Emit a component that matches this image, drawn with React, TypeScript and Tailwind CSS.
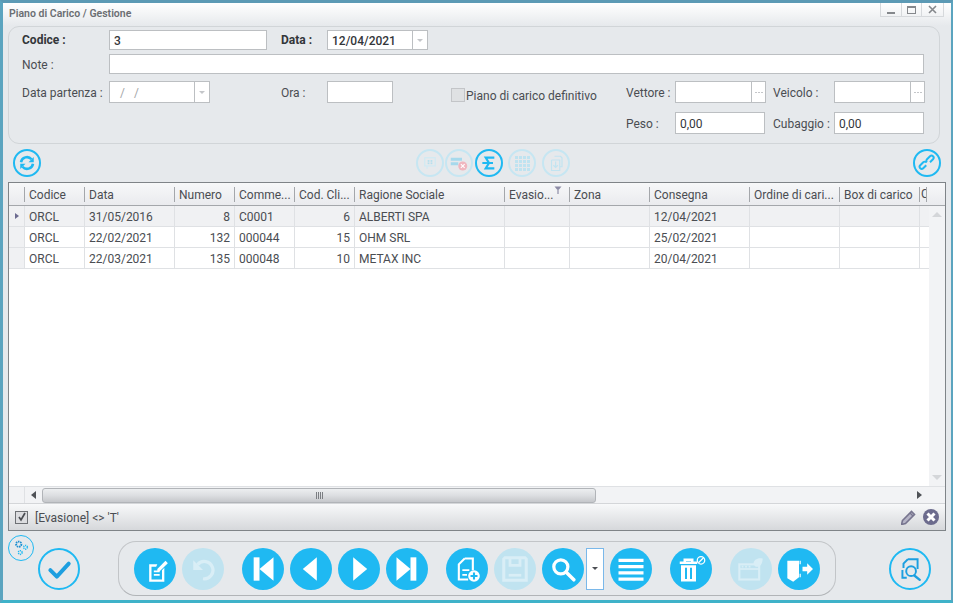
import type { ReactNode } from 'react'

const font = "[font-family:Roboto,sans-serif]"

const columns = [
  { label: 'Codice', w: 'w-[60px]', right: false },
  { label: 'Data', w: 'w-[90px]', right: false },
  { label: 'Numero', w: 'w-[60px]', right: true },
  { label: 'Comme...', w: 'w-[60px]', right: false },
  { label: 'Cod. Cli...', w: 'w-[60px]', right: true },
  { label: 'Ragione Sociale', w: 'w-[150px]', right: false },
  { label: 'Evasio...', w: 'w-[65px]', right: false },
  { label: 'Zona', w: 'w-[80px]', right: false },
  { label: 'Consegna', w: 'w-[100px]', right: false },
  { label: 'Ordine di cari...', w: 'w-[90px]', right: false },
  { label: 'Box di carico', w: 'w-[80px]', right: false },
]

const rows = [
  ['ORCL', '31/05/2016', '8', 'C0001', '6', 'ALBERTI SPA', '', '', '12/04/2021', '', ''],
  ['ORCL', '22/02/2021', '132', '000044', '15', 'OHM SRL', '', '', '25/02/2021', '', ''],
  ['ORCL', '22/03/2021', '135', '000048', '10', 'METAX INC', '', '', '20/04/2021', '', ''],
]

function Ico({ children, size = 24, view = 24 }: { children: ReactNode; size?: number; view?: number }) {
  return (
    <svg width={size} height={size} viewBox={`0 0 ${view} ${view}`} fill="none">
      {children}
    </svg>
  )
}

// pulsante pieno della barra in basso
function Solid({ children, off }: { children: ReactNode; off?: boolean }) {
  return (
    <div className={`w-[42px] h-[42px] shrink-0 rounded-full flex items-center justify-center ${off ? 'bg-[#c0e3f0]' : 'bg-[#1fb9f2]'}`}>
      {children}
    </div>
  )
}

// pulsante a cerchio vuoto
function Ring({ children, size, off }: { children: ReactNode; size: string; off?: boolean }) {
  return (
    <div className={`${size} shrink-0 rounded-full flex items-center justify-center border-2 ${off ? 'border-[#c6e6f2]' : 'border-[#1fb9f2]'}`}>
      {children}
    </div>
  )
}

function Label({ children, className = '' }: { children: ReactNode; className?: string }) {
  return <span className={`shrink-0 text-[#4a4d52] text-[12px] leading-none whitespace-nowrap ${className}`}>{children}</span>
}

function Input({ w, h = 'h-[20px]', value, bold, button, muted }: { w: string; h?: string; value?: string; bold?: boolean; button?: 'arrow' | 'dots'; muted?: boolean }) {
  return (
    <div className={`${w} ${h} shrink-0 flex bg-white border border-[#bcbfc2] text-[12px] text-[#33363a] items-center`}>
      <span className={`flex-1 min-w-0 pt-[1px] ${muted ? 'pl-[10px] text-[#a4a6a9] tracking-[3px]' : 'pl-[4px]'} ${bold ? 'font-medium' : ''}`}>{value}</span>
      {button === 'arrow' && (
        <span className="w-[15px] h-full border-l border-[#bcbfc2] flex items-center justify-center">
          <span className="w-0 h-0 border-x-[3px] border-x-transparent border-t-[3px] border-t-[#c4c6c9]" />
        </span>
      )}
      {button === 'dots' && (
        <span className="w-[14px] h-full border-l border-[#bcbfc2] flex items-center justify-center gap-[1px]">
          <span className="w-[2px] h-[1px] bg-[#c4c6c9]" />
          <span className="w-[2px] h-[1px] bg-[#c4c6c9]" />
          <span className="w-[2px] h-[1px] bg-[#c4c6c9]" />
        </span>
      )}
    </div>
  )
}

function FormPanel() {
  return (
    <div className="ml-[5px] mr-[11px] h-[118px] shrink-0 rounded-[11px] border border-[#d1d5d8] pl-[13px] pt-[3px] flex flex-col">
      <div className="flex items-center h-[20px]">
        <Label className="w-[87px] font-bold text-[#33363a]">Codice :</Label>
        <Input w="w-[158px]" value="3" bold />
        <Label className="w-[60px] pl-[14px] font-bold text-[#33363a]">Data :</Label>
        <Input w="w-[101px]" value="12/04/2021" bold button="arrow" />
      </div>
      <div className="flex items-center h-[20px] mt-[4px]">
        <Label className="w-[87px] mt-[1px]">Note :</Label>
        <Input w="w-[815px]" />
      </div>
      <div className="flex items-center h-[22px] mt-[7px]">
        <Label className="w-[87px] mt-[1px]">Data partenza :</Label>
        <Input w="w-[101px]" h="h-[22px]" value="/ /" muted button="arrow" />
        <Label className="w-[117px] pl-[71px] mt-[1px]">Ora :</Label>
        <Input w="w-[66px]" h="h-[22px]" />
        <div className="w-[14px] h-[14px] ml-[58px] mt-[6px] bg-[#dfe1e3] border border-[#c3c5c8]" />
        <span className="ml-[1px] w-[160px] mt-[8px] text-[12px] leading-none text-[#4a4d52] whitespace-nowrap">Piano di carico definitivo</span>
        <Label className="w-[49px] mt-[1px]">Vettore :</Label>
        <Input w="w-[91px]" h="h-[22px]" button="dots" />
        <Label className="w-[68px] pl-[7px] mt-[1px]">Veicolo :</Label>
        <Input w="w-[91px]" h="h-[22px]" button="dots" />
      </div>
      <div className="flex items-center h-[22px] mt-[9px] pl-[604px]">
        <Label className="w-[49px] mt-[1px]">Peso :</Label>
        <Input w="w-[90px]" h="h-[22px]" value="0,00" />
        <Label className="w-[69px] pl-[8px] mt-[1px]">Cubaggio :</Label>
        <Input w="w-[90px]" h="h-[22px]" value="0,00" />
      </div>
    </div>
  )
}

function GridTable() {
  return (
    <div className="ml-[5px] mr-[5px] h-[349px] shrink-0 border border-[#7f8488] bg-white flex flex-col overflow-hidden">
      {/* intestazione */}
      <div className="h-[23px] shrink-0 flex bg-gradient-to-b from-[#f7f8f9] to-[#eaebee] border-b border-[#a4a7ab] text-[12px] text-[#4a4d52]">
        <div className="w-[16px] shrink-0 flex items-center justify-end">
          <span className="w-px h-[15px] bg-[#a4a7ab]" />
        </div>
        {columns.map((c, i) => (
          <div key={c.label} className={`${c.w} relative shrink-0 flex items-center justify-between pl-[4px] pt-[1px] whitespace-nowrap overflow-hidden`}>
            <span>{c.label}</span>
            {i === 6 && (
              <svg className="absolute right-[8px] top-[3px]" width="8" height="8" viewBox="0 0 8 8">
                <path d="M0.5 0.5h7L5 3.5h-2z" fill="#8d8ca6" />
                <path d="M3.4 3h1.2v5H3.4z" fill="#8d8ca6" />
              </svg>
            )}
            <span className="w-px h-[15px] bg-[#a4a7ab] absolute right-0 top-[4px]" />
          </div>
        ))}
        <div className="flex-1 pl-[1px] overflow-hidden flex items-center">
          <span className="w-[5px] overflow-hidden">C</span>
          <span className="w-px h-[15px] bg-[#a4a7ab]" />
        </div>
      </div>
      {/* righe */}
      <div className="flex-1 flex min-h-0">
        <div className="w-[920px] shrink-0 flex flex-col">
          {rows.map((r, ri) => (
            <div key={ri} className={`h-[21px] shrink-0 flex border-b border-[#dfe1e4] text-[12px] text-[#4a4d52] ${ri === 0 ? 'bg-[#f0f1f3]' : 'bg-white'}`}>
              <div className="w-[16px] shrink-0 bg-[#f0f1f3] border-r border-[#dfe1e4] flex items-center justify-center">
                {ri === 0 && <span className="w-0 h-0 border-y-[3px] border-y-transparent border-l-[4px] border-l-[#6c6b90]" />}
              </div>
              {columns.map((c, ci) => (
                <div key={c.label} className={`${c.w} shrink-0 border-r border-[#dfe1e4] px-[4px] pt-[1px] flex items-center whitespace-nowrap ${c.right ? 'justify-end' : ''}`}>
                  {r[ci]}
                </div>
              ))}
            </div>
          ))}
        </div>
        <div className="flex-1 bg-[#f2f3f5] flex flex-col items-center pt-[6px]">
          <span className="w-0 h-0 border-x-[5px] border-x-transparent border-b-[5px] border-b-[#d4d6d9]" />
          <span className="mt-auto mb-[6px] w-0 h-0 border-x-[5px] border-x-transparent border-t-[5px] border-t-[#d4d6d9]" />
        </div>
      </div>
      {/* barra orizzontale */}
      <div className="h-[17px] shrink-0 flex items-center bg-[#f2f3f5] border-t border-[#dfe1e4]">
        <div className="w-[16px] h-full shrink-0 border-r border-[#dfe1e4]" />
        <span className="ml-[6px] w-0 h-0 border-y-[4px] border-y-transparent border-r-[5px] border-r-[#4f5257]" />
        <div className="ml-[6px] w-[554px] h-[15px] rounded-[3px] border border-[#b1b4b8] bg-gradient-to-b from-[#eceef0] via-[#dcdee1] to-[#c5c7cb] flex items-center justify-center">
          <span className="flex gap-[1px]">
            <span className="w-px h-[7px] bg-[#7b7e82]" />
            <span className="w-px h-[7px] bg-[#7b7e82]" />
            <span className="w-px h-[7px] bg-[#7b7e82]" />
            <span className="w-px h-[7px] bg-[#7b7e82]" />
          </span>
        </div>
        <span className="ml-[321px] w-0 h-0 border-y-[4px] border-y-transparent border-l-[5px] border-l-[#4f5257]" />
      </div>
      {/* filtro */}
      <div className="h-[27px] shrink-0 flex items-center pl-[6px] pr-[6px] border-t border-[#d4d6d9] bg-gradient-to-b from-[#f8f9fa] to-[#d6d8db]">
        <div className="w-[13px] h-[13px] border border-[#6e7175] bg-[#dcdde0] flex items-center justify-center">
          <svg width="10" height="10" viewBox="0 0 10 10" fill="none">
            <path d="M2 5l2 3 4-7" stroke="#4a4d52" strokeWidth="1.7" />
          </svg>
        </div>
        <span className="ml-[7px] pt-[1px] text-[12px] text-[#4a4d52]">[Evasione] &lt;&gt; 'T'</span>
        <svg className="ml-auto" width="16" height="16" viewBox="0 0 16 16" fill="none">
          <path d="M1.5 11.5L10.5 2.5l3 3-9 9-4 1z" stroke="#77758f" strokeWidth="1.6" fill="#b5b4c6" />
          <path d="M9 4l3 3" stroke="#77758f" strokeWidth="1.2" />
        </svg>
        <svg className="ml-[6px]" width="16" height="16" viewBox="0 0 16 16">
          <circle cx="8" cy="8" r="8" fill="#6c6b8d" />
          <path d="M4.5 4.5l7 7M11.5 4.5l-7 7" stroke="#fff" strokeWidth="3" />
        </svg>
      </div>
    </div>
  )
}

function MidToolbar() {
  return (
    <div className="mx-[10px] h-[38px] shrink-0 flex items-center">
      <Ring size="w-[28px] h-[28px]">
        <Ico size={18}>
          <path d="M4 11a8 8 0 0 1 14-4" stroke="#1fb9f2" strokeWidth="3.4" />
          <path d="M21 4v7h-7z" fill="#1fb9f2" />
          <path d="M20 13a8 8 0 0 1-14 4" stroke="#1fb9f2" strokeWidth="3.4" />
          <path d="M3 20v-7h7z" fill="#1fb9f2" />
        </Ico>
      </Ring>
      <div className="ml-[375px]">
        <Ring size="w-[28px] h-[28px]" off>
          <Ico size={14}>
            <rect x="3" y="3" width="18" height="14" stroke="#cfeaf4" strokeWidth="2" />
            <path d="M7 17v5" stroke="#cfeaf4" strokeWidth="2" />
            <rect x="8" y="7" width="3" height="3" fill="#b5dfee" />
            <rect x="13" y="7" width="3" height="3" fill="#b5dfee" />
            <rect x="8" y="11" width="3" height="3" fill="#b5dfee" />
            <rect x="13" y="11" width="3" height="3" fill="#b5dfee" />
          </Ico>
        </Ring>
      </div>
      <div className="ml-[1px]">
        <Ring size="w-[28px] h-[28px]" off>
          <Ico size={18}>
            <rect x="1" y="5" width="15" height="4" fill="#a6d9ec" />
            <rect x="1" y="11" width="10" height="4" fill="#a6d9ec" />
            <circle cx="17" cy="16" r="6" fill="#f0b6bf" />
            <path d="M14.5 13.5l5 5M19.5 13.5l-5 5" stroke="#fff" strokeWidth="1.5" />
          </Ico>
        </Ring>
      </div>
      <div className="ml-[2px]">
        <Ring size="w-[28px] h-[28px]">
          <Ico size={16}>
            <path d="M20 4H7l5 8-5 8h13M2 12h16" stroke="#1fb9f2" strokeWidth="3.2" />
          </Ico>
        </Ring>
      </div>
      <div className="ml-[5px]">
        <Ring size="w-[28px] h-[28px]" off>
          <div className="grid grid-cols-4 gap-px">
            {Array.from({ length: 16 }).map((_, i) => (
              <span key={i} className="w-[3px] h-[3px] bg-[#bfe3f0]" />
            ))}
          </div>
        </Ring>
      </div>
      <div className="ml-[6px]">
        <Ring size="w-[28px] h-[28px]" off>
          <Ico size={18}>
            <path d="M10 3h8l2 2v12h-3M6 8v14h11V8H6" stroke="#c2e4f1" strokeWidth="1.6" />
            <path d="M11.5 10v8M8.5 15l3 3 3-3" stroke="#c2e4f1" strokeWidth="1.6" />
          </Ico>
        </Ring>
      </div>
      <div className="ml-auto">
        <Ring size="w-[28px] h-[28px]">
          <Ico size={18}>
            <path d="M10 14l-4 4a2.8 2.8 0 0 1-4-4l4-4a2.8 2.8 0 0 1 4 0" stroke="#1fb9f2" strokeWidth="2.6" transform="translate(1 1)" />
            <path d="M14 10l4-4a2.8 2.8 0 0 0-4-4l-4 4a2.8 2.8 0 0 0 0 4" stroke="#1fb9f2" strokeWidth="2.6" transform="translate(2 1)" />
          </Ico>
        </Ring>
      </div>
    </div>
  )
}

function BottomBar() {
  return (
    <div className="flex-1 flex min-h-0 pl-[5px]">
      <div className="w-[26px] h-[26px] mt-[4px] shrink-0 rounded-full border border-[#1fb9f2] flex items-center justify-center">
        <Ico size={18}>
          <circle cx="9" cy="7" r="3.5" stroke="#1f8fd0" strokeWidth="2.5" strokeDasharray="2 1" />
          <circle cx="18" cy="11" r="2.5" stroke="#1fb9f2" strokeWidth="2" strokeDasharray="1.5 1" />
          <circle cx="11" cy="18" r="2.5" stroke="#1fb9f2" strokeWidth="2" strokeDasharray="1.5 1" />
        </Ico>
      </div>
      <div className="ml-[4px] mt-[17px]">
        <Ring size="w-[42px] h-[42px]">
          <Ico size={26}>
            <path d="M4 13l6 6L21 7" stroke="#1d9fe0" strokeWidth="3.6" strokeLinecap="round" strokeLinejoin="round" />
          </Ico>
        </Ring>
      </div>
      {/* barra principale */}
      <div className="ml-[38px] mt-[10px] w-[718px] h-[55px] shrink-0 rounded-[18px] border border-[#c2c5c8] border-b-[#b1b4b7] flex items-center pl-[15px]">
        <Solid>
          <Ico size={28}>
            <path d="M7 8h7l-1 2H9v11h9v-8l2-2v12H7z" fill="#fff" />
            <path d="M11 14h5M11 17h5" stroke="#fff" strokeWidth="1.6" />
            <path d="M14 12l7-7 2 2-7 7h-2z" fill="#fff" />
          </Ico>
        </Solid>
        <div className="ml-[6px]">
          <Solid off>
            <Ico size={26}>
              <path d="M7 8a8 8 0 1 1 5 13" stroke="#d9eef6" strokeWidth="3" />
              <path d="M3 4v9h9z" fill="#d9eef6" />
            </Ico>
          </Solid>
        </div>
        <div className="ml-[18px]">
          <Solid>
            <Ico size={28}>
              <rect x="4" y="2" width="5" height="20" fill="#fff" />
              <path d="M21 2v20L9 12z" fill="#fff" />
            </Ico>
          </Solid>
        </div>
        <div className="ml-[6px]">
          <Solid>
            <Ico size={28}>
              <path d="M17 2v20L5 12z" fill="#fff" />
            </Ico>
          </Solid>
        </div>
        <div className="ml-[6px]">
          <Solid>
            <Ico size={28}>
              <path d="M7 2v20l12-10z" fill="#fff" />
            </Ico>
          </Solid>
        </div>
        <div className="ml-[6px]">
          <Solid>
            <Ico size={28}>
              <rect x="15" y="2" width="5" height="20" fill="#fff" />
              <path d="M3 2v20l12-10z" fill="#fff" />
            </Ico>
          </Solid>
        </div>
        <div className="ml-[18px]">
          <Solid>
            <Ico size={28}>
              <path d="M10 3h7v10M10 3L5 8v13h8" stroke="#fff" strokeWidth="1.8" />
              <path d="M8 13h6M8 17h4" stroke="#fff" strokeWidth="1.5" />
              <circle cx="18" cy="18" r="5" fill="#fff" />
              <path d="M18 15v6M15 18h6" stroke="#1fb9f2" strokeWidth="1.8" />
            </Ico>
          </Solid>
        </div>
        <div className="ml-[6px]">
          <Solid off>
            <Ico size={30}>
              <path d="M4 3h16l1 1v17H3V4z" stroke="#d9eef6" strokeWidth="2.4" />
              <path d="M8 3v6h8V3" stroke="#d9eef6" strokeWidth="2.2" />
              <path d="M7 17h10" stroke="#d9eef6" strokeWidth="2.2" />
            </Ico>
          </Solid>
        </div>
        <div className="ml-[6px]">
          <Solid>
            <Ico size={26}>
              <circle cx="10" cy="10" r="6.5" stroke="#fff" strokeWidth="3" />
              <path d="M15 15l7 7" stroke="#fff" strokeWidth="3.2" strokeLinecap="round" />
            </Ico>
          </Solid>
        </div>
        <div className="ml-[2px] w-[18px] h-[42px] shrink-0 bg-white border border-[#7ab8ea] flex items-center justify-center">
          <span className="w-0 h-0 border-x-[3px] border-x-transparent border-t-[3px] border-t-[#4c4f54]" />
        </div>
        <div className="ml-[6px]">
          <Solid>
            <Ico size={30}>
              <path d="M2 5h20M2 10h20M2 15h20M2 20h20" stroke="#fff" strokeWidth="2.6" />
            </Ico>
          </Solid>
        </div>
        <div className="ml-[18px]">
          <Solid>
            <Ico size={30}>
              <path d="M3 7h14M7 7V4.5h6V7" stroke="#fff" strokeWidth="2" />
              <path d="M4 9h12v13H4z" fill="#fff" />
              <path d="M8 11v9M12 11v9" stroke="#1fb9f2" strokeWidth="1.6" />
              <circle cx="20" cy="5" r="3" stroke="#fff" strokeWidth="1" />
              <path d="M18 7l4-4" stroke="#fff" strokeWidth="1" />
            </Ico>
          </Solid>
        </div>
        <div className="ml-[18px]">
          <Solid off>
            <Ico size={28}>
              <rect x="2" y="8" width="17" height="13" stroke="#d9eef6" strokeWidth="1.8" />
              <path d="M2 12h17" stroke="#d9eef6" strokeWidth="1.4" />
              <path d="M4 10h1.5M7 10h1.5M10 10h1.5" stroke="#d9eef6" strokeWidth="1.4" />
              <path d="M14 8c0-4 4-6 8-5 0 4-2 8-6 7z" fill="#d9eef6" />
            </Ico>
          </Solid>
        </div>
        <div className="ml-[6px]">
          <Solid>
            <Ico size={28}>
              <path d="M2 5h10v14l-5 4-5-3z" fill="#fff" />
              <path d="M13 5v3M13 16v3" stroke="#fff" strokeWidth="1" />
              <path d="M15 10h4V7l5 5-5 5v-3h-4z" fill="#fff" />
            </Ico>
          </Solid>
        </div>
      </div>
      <div className="ml-[53px] mt-[17px]">
        <Ring size="w-[42px] h-[42px]">
          <Ico size={26}>
            <path d="M10 3h9v9M10 3L6 7v4" stroke="#1d9fe0" strokeWidth="1.8" />
            <path d="M5 13v7h4" stroke="#1d9fe0" strokeWidth="1.8" />
            <circle cx="13" cy="14" r="4.5" stroke="#1d9fe0" strokeWidth="1.8" />
            <path d="M16 18l5 4" stroke="#1d9fe0" strokeWidth="2.2" strokeLinecap="round" />
          </Ico>
        </Ring>
      </div>
    </div>
  )
}

export default function App() {
  return (
    <div className={`${font} w-[953px] h-[603px] overflow-hidden bg-[#e6e9ec] flex flex-col border-t-[3px] border-t-[#5c9ab5] border-l-[3px] border-l-[#5ba4bf] border-r-[2px] border-r-[#5ba4bf] border-b-[3px] border-b-[#3fb2c9]`}>
      <div className="h-[23px] shrink-0 flex items-start justify-between bg-gradient-to-b from-[#ffffff] to-[#e6e9ec]">
        <span className="pl-[6px] pt-[4px] text-[10.5px] leading-[14px] font-semibold text-[#6b6e72]">Piano di Carico / Gestione</span>
        <div className="mr-[7px] flex border border-t-0 border-[#d6d9dc] h-[14px]">
          <span className="w-[21px] border-r border-[#d6d9dc] flex items-end justify-center pb-[2px]">
            <span className="w-[8px] h-[2px] bg-[#85888c]" />
          </span>
          <span className="w-[20px] border-r border-[#d6d9dc] flex items-center justify-center">
            <span className="w-[9px] h-[8px] border border-t-2 border-[#85888c]" />
          </span>
          <span className="w-[21px] flex items-center justify-center">
            <svg width="9" height="9" viewBox="0 0 9 9">
              <path d="M1 1l7 7M8 1L1 8" stroke="#85888c" strokeWidth="1.6" />
            </svg>
          </span>
        </div>
      </div>
      <FormPanel />
      <MidToolbar />
      <GridTable />
      <BottomBar />
    </div>
  )
}
